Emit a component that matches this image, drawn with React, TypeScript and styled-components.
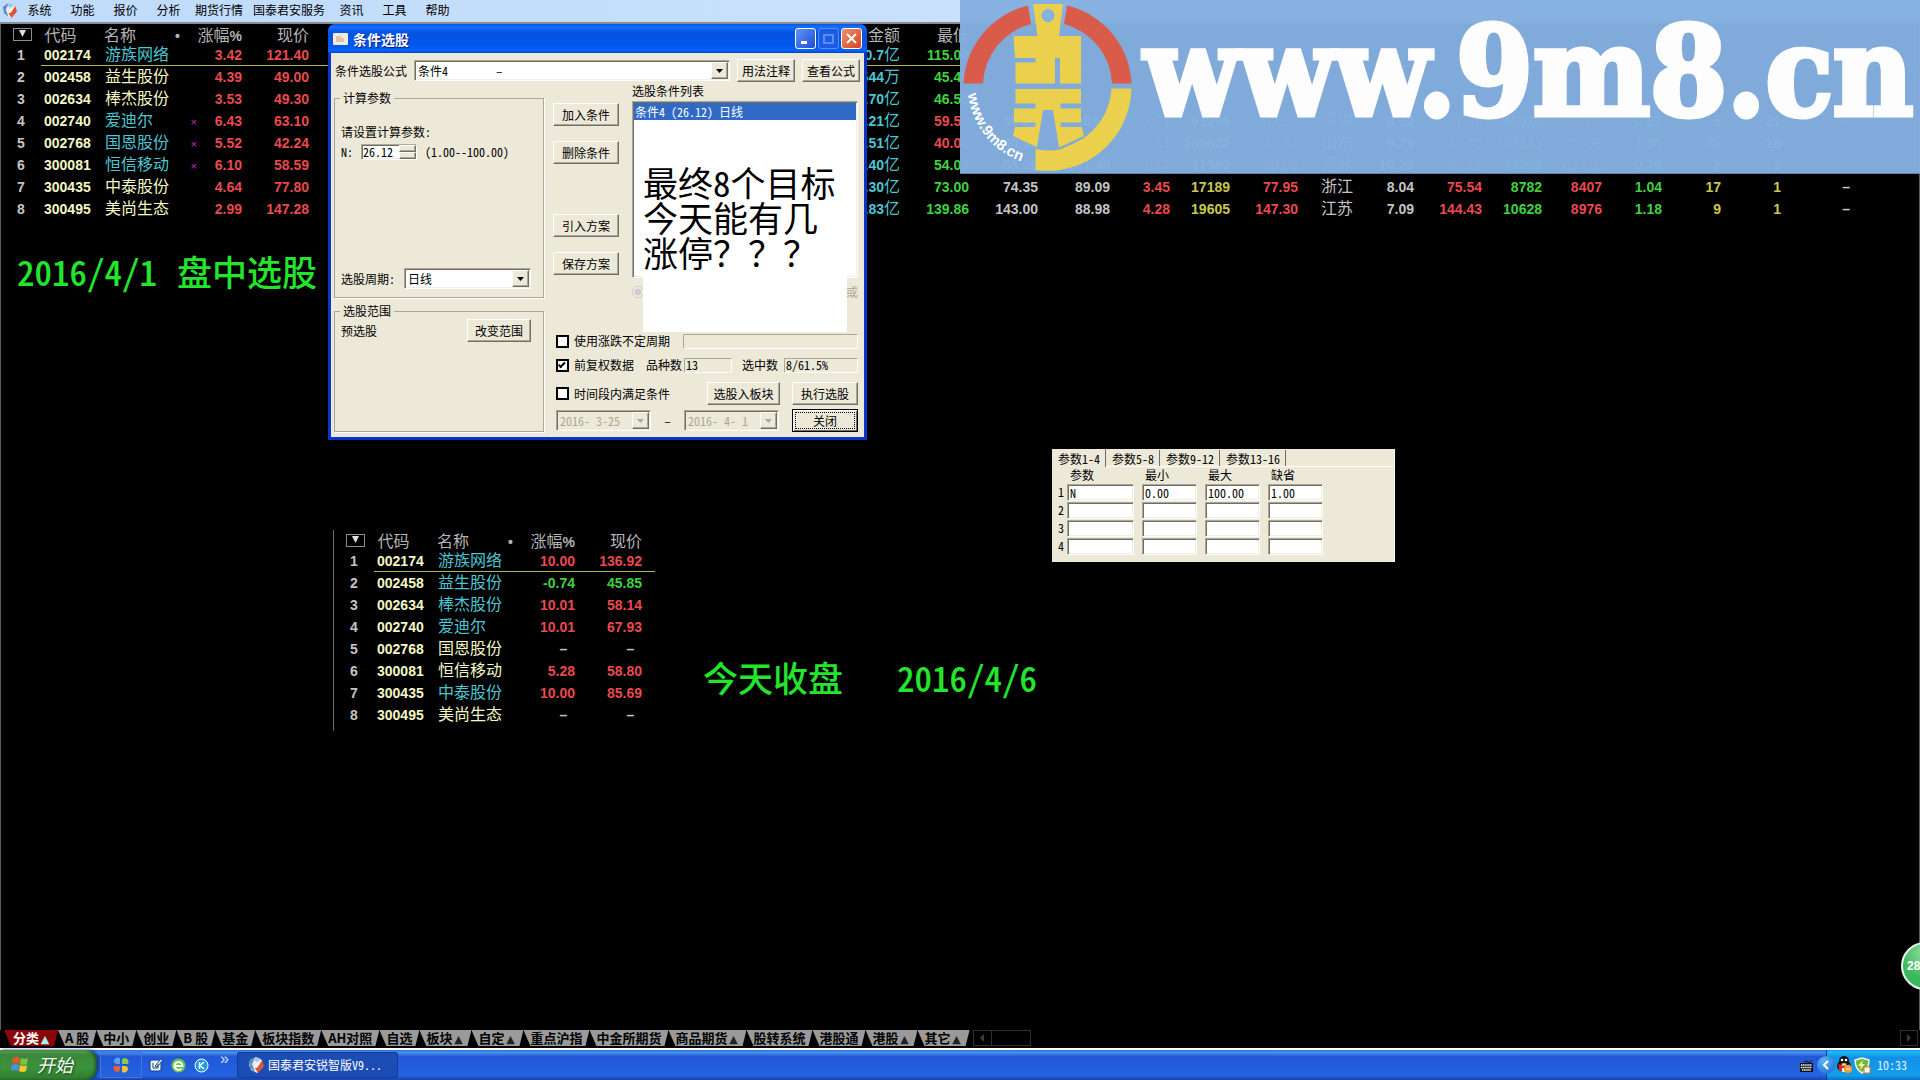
import React from "react";
import styled, { createGlobalStyle, css } from "styled-components";

const uiFont = `"Noto Sans CJK SC", "Liberation Sans", sans-serif`;
const numFont = `"Liberation Sans", "Noto Sans CJK SC", sans-serif`;

const red = "#e84a4e";
const green = "#3fd23f";
const yellow = "#c8c850";
const grey = "#c4c4c4";
const cyan = "#4cc6d2";
const cream = "#f4f8c4";

const GlobalStyle = createGlobalStyle`
  *, *::before, *::after { box-sizing: border-box; }
  body { margin: 0; background: #000; }
  button, input, select { font: inherit; color: inherit; margin: 0; border-radius: 0; }
`;

const raised = css`
  border: 1px solid;
  border-color: #fff #716f64 #716f64 #fff;
  box-shadow: inset -1px -1px 0 #aca899;
`;

const sunken = css`
  border: 1px solid;
  border-color: #aca899 #fff #fff #aca899;
  box-shadow: inset 1px 1px 0 #716f64, inset -1px -1px 0 #f1efe2;
`;

const Screen = styled.div`
  position: relative;
  display: flex;
  flex-direction: column;
  min-height: 100vh;
  overflow: hidden;
  background: #000;
  color: #000;
  font-family: ${uiFont};
  font-size: 12px;
  line-height: 16px;
  font-feature-settings: "hwid";
`;

/* ---------- menu bar ---------- */

const MenuBar = styled.nav`
  display: flex;
  align-items: center;
  height: 24px;
  padding-bottom: 2px;
  border-bottom: 2px solid #8a8d90;
  background: linear-gradient(90deg, #bfdbfb, #d3e6fb);
`;

const MenuLogo = styled.span`
  display: flex;
  justify-content: center;
  width: 18px;
`;

const MenuItem = styled.button`
  min-width: 43px;
  padding: 0 5px;
  border: 0;
  background: none;
  white-space: nowrap;
`;

/* ---------- quotes ---------- */

const Main = styled.main`
  position: relative;
  flex: 1;
  border: solid #5c5c5c;
  border-width: 0 1px;
`;

const QuoteTable = styled.table`
  width: 100%;
  table-layout: fixed;
  border-collapse: separate;
  border-spacing: 0;
  font: bold 14px/18px ${numFont};
  color: ${grey};
`;

const HeadCell = styled.th<{ $align?: string }>`
  height: 20px;
  padding: 0;
  text-align: ${(p) => p.$align ?? "right"};
  font: 400 16px/18px ${uiFont};
  color: #b4b4b4;
  white-space: nowrap;
`;

const Percent = styled.span`
  font: bold 14px/14px ${numFont};
`;

const QuoteCell = styled.td<{ $color?: string; $align?: string; $lined?: boolean; $indent?: number }>`
  height: 22px;
  padding: 0 0 0 ${(p) => p.$indent ?? 0}px;
  text-align: ${(p) => p.$align ?? "right"};
  color: ${(p) => p.$color ?? grey};
  border-bottom: 1px solid ${(p) => (p.$lined ? "#b4b450" : "transparent")};
  white-space: nowrap;
`;

const Han = styled.span`
  font: 400 16px/14px ${uiFont};
`;

const Flag = styled.span`
  color: #c030c8;
  font: 11px/14px ${numFont};
`;

const FilterButton = styled.button`
  display: block;
  width: 19px;
  height: 13px;
  margin: 0 0 0 12px;
  padding: 0;
  border: 1px solid #8c8c8c;
  background: none;
  line-height: 0;
`;

const ClosingQuotes = styled.section`
  position: absolute;
  left: 332px;
  top: 506px;
  width: 322px;
  padding-bottom: 5px;
  border-left: 1px solid #6a6a6a;
`;

const Note = styled.p<{ $x: number; $y: number; $gap: number }>`
  position: absolute;
  left: ${(p) => p.$x}px;
  top: ${(p) => p.$y}px;
  display: flex;
  gap: ${(p) => p.$gap}px;
  margin: 0;
  color: #22e52c;
  font: 500 35px/44px ${uiFont};
  font-feature-settings: "hwid";
  white-space: nowrap;
`;

/* ---------- watermark banner ---------- */

const Banner = styled.aside`
  position: absolute;
  z-index: 5;
  top: 0;
  right: 0;
  display: flex;
  align-items: center;
  width: 50%;
  height: 174px;
  overflow: hidden;
  background: rgba(131, 175, 224, 0.97);
  border-bottom: 1px solid #5f83a8;
`;

const BannerText = styled.span`
  margin-left: 8px;
  color: #fdfdfe;
  font: bold 123px/144px "DejaVu Serif Condensed", "DejaVu Serif", serif;
  font-stretch: condensed;
  -webkit-text-stroke: 5px #fdfdfe;
  padding-bottom: 30px;
  white-space: nowrap;
`;

/* ---------- dialog ---------- */

const Dialog = styled.section`
  position: absolute;
  z-index: 3;
  left: 327px;
  top: 0;
  width: 539px;
  padding: 0 3px 3px;
  border-radius: 7px 7px 0 0;
  background: #0b35c8;
`;

const TitleBar = styled.header`
  display: flex;
  align-items: center;
  gap: 2px;
  height: 29px;
  margin: 0 -3px;
  padding: 0 5px 0 5px;
  border-radius: 7px 7px 0 0;
  background: linear-gradient(#0a55d8, #1470ff 10%, #0453e0 30%, #0458ee 75%, #0364ff 92%, #0340c0);
`;

const TitleText = styled.h1`
  flex: 1;
  margin: 0;
  color: #fff;
  font: bold 14px/20px ${uiFont};
  text-shadow: 1px 1px 1px #0a1883;
`;

const TitleButton = styled.button<{ $close?: boolean; $dim?: boolean }>`
  display: flex;
  align-items: center;
  justify-content: center;
  width: 21px;
  height: 21px;
  padding: 0;
  border: 1px solid ${(p) => (p.$dim ? "#5c8cf0" : "#fff")};
  border-radius: 3px;
  background: ${(p) =>
    p.$close
      ? "linear-gradient(135deg, #f09070, #d8431c)"
      : p.$dim
        ? "#1a5ce6"
        : "linear-gradient(135deg, #5f93f5, #1c4fd4)"};
`;

const DialogBody = styled.div`
  padding: 6px 4px 5px 3px;
  background: #ece9d8;
`;

const FormulaRow = styled.div`
  display: flex;
  align-items: center;
  gap: 7px;
  height: 23px;
  padding-left: 1px;
`;

const SelectBox = styled.span<{ $w?: number; $grow?: boolean; $disabled?: boolean }>`
  position: relative;
  display: flex;
  flex: ${(p) => (p.$grow ? "1" : "none")};
  width: ${(p) => (p.$w ? `${p.$w}px` : "auto")};
  height: 21px;
  ${sunken}
  background: ${(p) => (p.$disabled ? "#ece9d8" : "#fff")};
  color: ${(p) => (p.$disabled ? "#aca899" : "#000")};
  select {
    flex: 1;
    min-width: 0;
    padding: 0 18px 0 3px;
    border: 0;
    background: none;
    appearance: none;
    color: inherit;
    opacity: 1;
    line-height: 19px;
  }
`;

const DropArrow = styled.span`
  position: absolute;
  top: 1px;
  right: 1px;
  bottom: 1px;
  display: flex;
  align-items: center;
  justify-content: center;
  width: 17px;
  ${raised}
  background: #ece9d8;
  pointer-events: none;
`;

const PushButton = styled.button<{ $w: number; $default?: boolean }>`
  width: ${(p) => p.$w}px;
  height: 23px;
  padding: 0;
  ${raised}
  background: #ece9d8;
  line-height: 19px;
  white-space: nowrap;
  ${(p) =>
    p.$default &&
    css`
      border-color: #000;
      outline: 1px dotted #000;
      outline-offset: -4px;
      box-shadow: inset 1px 1px 0 #fff, inset -1px -1px 0 #716f64;
    `}
`;

const Columns = styled.div`
  display: flex;
  gap: 9px;
  margin-top: 1px;
`;

const LeftPane = styled.div`
  display: flex;
  flex-direction: column;
  gap: 5px;
  width: 210px;
  padding-top: 7px;
`;

const Group = styled.fieldset<{ $h: number }>`
  height: ${(p) => p.$h}px;
  min-width: 0;
  margin: 0;
  padding: 0 12px 0 6px;
  border: 1px solid #aca899;
  box-shadow: 1px 1px 0 #fff;
  legend {
    padding: 0 3px;
    margin-left: -1px;
    line-height: 16px;
  }
`;

const GroupLine = styled.div<{ $gap?: number; $top: number; $between?: boolean }>`
  display: flex;
  align-items: center;
  gap: ${(p) => p.$gap ?? 4}px;
  justify-content: ${(p) => (p.$between ? "space-between" : "flex-start")};
  margin-top: ${(p) => p.$top}px;
  min-height: 20px;
  white-space: nowrap;
`;

const SpinBox = styled.span`
  display: flex;
  width: 56px;
  height: 16px;
  ${sunken}
  background: #fff;
  input {
    flex: 1;
    min-width: 0;
    padding: 0 0 0 1px;
    border: 0;
    background: none;
    line-height: 14px;
  }
`;

const Spinner = styled.span`
  display: flex;
  flex-direction: column;
  width: 17px;
  button {
    flex: 1;
    min-height: 0;
    padding: 0;
    ${raised}
    background: #ece9d8;
    line-height: 0;
  }
`;

const RightPane = styled.div`
  display: flex;
  flex: 1;
  flex-direction: column;
  min-width: 0;
`;

const ListArea = styled.div`
  position: relative;
  display: flex;
  gap: 13px;
  padding-right: 2px;
`;

const ButtonStack = styled.div`
  display: flex;
  flex-direction: column;
  gap: 15px;
  padding-top: 20px;
`;

const StackGap = styled.span`
  height: 20px;
`;

const ListColumn = styled.div`
  display: flex;
  flex: 1;
  flex-direction: column;
`;

const ConditionList = styled.ul`
  height: 177px;
  margin: 2px 0 0;
  padding: 1px;
  list-style: none;
  ${sunken}
  background: #fff;
  li {
    padding-left: 1px;
    background: #316ac5;
    color: #fff;
    line-height: 17px;
  }
`;

const RadioLine = styled.div`
  display: flex;
  justify-content: space-between;
  align-items: center;
  height: 28px;
  color: #aca899;
  input { width: 12px; height: 12px; margin: 0; }
`;

const CoverNote = styled.p`
  position: absolute;
  left: 90px;
  top: 81px;
  width: 204px;
  height: 168px;
  margin: 0;
  background: #fff;
  font: 35px/35px ${uiFont};
  font-feature-settings: "hwid";
  white-space: nowrap;
`;

const OptionRow = styled.div<{ $top: number }>`
  display: flex;
  align-items: center;
  min-height: 16px;
  margin-top: ${(p) => p.$top}px;
  padding: 0 2px 0 3px;
`;

const CheckLabel = styled.label`
  display: flex;
  align-items: center;
  gap: 5px;
  input {
    display: grid;
    place-content: center;
    width: 13px;
    height: 13px;
    border: 2px solid #000;
    background: #fff;
    appearance: none;
  }
  input:checked::before {
    content: "";
    width: 7px;
    height: 4px;
    border: solid #000;
    border-width: 0 0 2px 2px;
    transform: rotate(-45deg) translateY(-1px);
  }
`;

const Readout = styled.output<{ $w: number }>`
  width: ${(p) => p.$w}px;
  height: 15px;
  padding-left: 1px;
  border: 1px solid;
  border-color: #aca899 #fff #fff #aca899;
  line-height: 12px;
`;

const Spring = styled.span`
  flex: 1;
`;

const Gap = styled.span<{ $w: number }>`
  width: ${(p) => p.$w}px;
  text-align: center;
`;

/* ---------- parameter sheet ---------- */

const ParamSheet = styled.section`
  position: absolute;
  left: 1051px;
  top: 425px;
  width: 343px;
  height: 113px;
  background: #ece9d8;
  border-right: 1px solid #fff;
`;

const TabRow = styled.div`
  display: flex;
  align-items: flex-end;
  height: 18px;
  border-bottom: 1px solid #fff;
`;

const SheetTab = styled.button<{ $on?: boolean }>`
  height: ${(p) => (p.$on ? 18 : 16)}px;
  margin-bottom: ${(p) => (p.$on ? -1 : 0)}px;
  padding: 0 5px 0 6px;
  border: 0;
  border-right: 1px solid #716f64;
  background: #ece9d8;
  line-height: 15px;
`;

const ParamTable = styled.table`
  margin: 0 0 0 4px;
  border-collapse: separate;
  border-spacing: 0;
  th { padding: 0 0 0 3px; font-weight: 400; text-align: left; line-height: 16px; }
  tbody th { width: 11px; padding-left: 2px; }
  td { padding: 0 8px 0 0; }
  tbody td { height: 18px; }
`;

const ParamInput = styled.input<{ $w: number }>`
  display: block;
  width: ${(p) => p.$w}px;
  height: 17px;
  padding: 0 2px;
  ${sunken}
  background: #fff;
  line-height: 13px;
`;

/* ---------- floating ball ---------- */

const Ball = styled.button`
  position: absolute;
  z-index: 4;
  right: -29px;
  bottom: 90px;
  width: 48px;
  height: 48px;
  padding: 0 0 0 4px;
  border: 2px solid #e8f4ea;
  border-radius: 50%;
  background: radial-gradient(circle at 50% 20%, #8fe0a0, #3cb85c 60%);
  color: #fff;
  font: bold 12px/20px ${numFont};
  text-align: left;
`;

/* ---------- category tabs ---------- */

const CategoryBar = styled.nav`
  display: flex;
  align-items: stretch;
  height: 17px;
  margin-bottom: 1px;
  padding: 0 3px 0 4px;
`;

const Category = styled.button<{ $on?: boolean }>`
  height: 16px;
  padding: 0 7px 0 ${(p) => (p.$on ? 9 : 7)}px;
  border: 0;
  clip-path: polygon(0 0, 100% 0, calc(100% - 4px) 100%, 7px 100%);
  background: ${(p) => (p.$on ? "#8c0508" : "#9a9a9a")};
  color: ${(p) => (p.$on ? "#fff" : "#000")};
  font: bold 13px/16px ${uiFont};
  white-space: nowrap;
`;

const Caret = styled.span<{ $on?: boolean }>`
  display: inline-block;
  width: 12px;
  color: ${(p) => (p.$on ? "#9ff4f4" : "#222")};
  font: 11px/14px "DejaVu Sans", sans-serif;
  text-align: center;
`;

const ScrollBox = styled.button<{ $w: number }>`
  display: flex;
  align-items: center;
  justify-content: center;
  width: ${(p) => p.$w}px;
  height: 16px;
  margin-right: -1px;
  padding: 0;
  border: 1px solid #303030;
  background: #000;
`;

/* ---------- taskbar ---------- */

const Taskbar = styled.footer`
  display: flex;
  align-items: stretch;
  height: 32px;
  border-top: 2px solid #fff;
  background: linear-gradient(#3168d5, #4993e6 8%, #2157d7 22%, #2663e0 85%, #1941a5);
`;

const StartButton = styled.button`
  display: flex;
  align-items: center;
  gap: 7px;
  width: 97px;
  padding: 0 0 2px 11px;
  border: 0;
  border-radius: 0 10px 12px 0;
  background: linear-gradient(#5eac56, #3c873c 15%, #399339 60%, #2f7a2f);
  box-shadow: inset -2px 0 3px #1e561e, 2px 0 3px #14379a;
  color: #fff;
  font: italic 18px/24px ${uiFont};
  text-shadow: 1px 1px 2px #123c12;
`;

const QuickLaunch = styled.div`
  display: flex;
  align-items: center;
  width: 140px;
  padding-left: 3px;
`;

const QuickButton = styled.button<{ $boxed?: boolean }>`
  display: flex;
  align-items: center;
  justify-content: center;
  width: ${(p) => (p.$boxed ? 42 : 23)}px;
  height: 26px;
  margin-right: ${(p) => (p.$boxed ? 2 : 0)}px;
  padding: 0;
  border: 1px solid ${(p) => (p.$boxed ? "#3f78e6" : "transparent")};
  background: none;
`;

const More = styled.button`
  align-self: flex-start;
  padding: 0 0 0 7px;
  border: 0;
  background: none;
  color: #cfe0ff;
  font: 16px/18px ${numFont};
`;

const TaskButton = styled.button`
  display: flex;
  align-items: center;
  gap: 4px;
  width: 161px;
  height: 26px;
  margin-top: 2px;
  padding: 0 10px;
  border: 1px solid #123a9c;
  border-radius: 2px;
  background: #1c4db4;
  color: #fff;
  white-space: nowrap;
`;

const KeyboardButton = styled.button`
  display: flex;
  align-items: center;
  margin-left: auto;
  padding: 0 13px 0 0;
  border: 0;
  background: none;
`;

const Tray = styled.div`
  position: relative;
  display: flex;
  align-items: center;
  gap: 2px;
  width: 94px;
  padding: 0 13px 0 9px;
  border-left: 1px solid #0b3f9e;
  background: linear-gradient(#1a9ff0, #19b9f3 8%, #1290e8 25%, #139ee9 85%, #0d6fc8);
  color: #fff;
`;

const TrayToggle = styled.button`
  position: absolute;
  left: -10px;
  top: 6px;
  width: 18px;
  height: 18px;
  padding: 0;
  border: 0;
  border-radius: 50%;
  background: radial-gradient(circle at 40% 30%, #5fb6f6, #1560d0);
  line-height: 0;
`;

const Clock = styled.time`
  margin-left: auto;
  color: #e6f2ff;
`;

/* ---------- drawings ---------- */

const BrokerIcon = ({ size = 16 }: { size?: number }) => (
  <svg width={size} height={size} viewBox="0 0 16 16">
    <path d="M2 3 8 0l6 3 1 7-6 6-6-3-2-5z" fill="#e4ecf4" />
    <path d="M1 4l6-4-1 3-2 4 3 8-5-4z" fill="#5b8fc0" />
    <path d="M8 0l5 2-4 3-3-2z" fill="#a8c4e0" />
    <path d="M14 3l2 6-6 7-3-5c3 0 5-4 7-8z" fill="#e2502e" />
    <path d="M9 6l2 0-2 5-2-2z" fill="#fff" />
  </svg>
);

const Down = ({ dim }: { dim?: boolean }) => (
  <svg width="7" height="4" viewBox="0 0 7 4">
    <path d="M0 0h7L3.500 4z" fill={dim ? "#aca899" : "#000"} />
  </svg>
);

const FilterMark = () => (
  <svg width="9" height="8" viewBox="0 0 9 8">
    <path d="M1 0h7L4.500 7z" fill="#e0e0e0" />
  </svg>
);

const WindowsFlag = () => (
  <svg width="19" height="18" viewBox="0 0 19 18">
    <path d="M2 3q4-2 7 0L8 9Q5 7 1 9z" fill="#e8562a" />
    <path d="M10 3q4 2 7 0l-1 6q-4 2-7 0z" fill="#7cc243" />
    <path d="M1 10q4-2 7 0l-1 6q-4-2-7 0z" fill="#4a8cf0" />
    <path d="M9 10q4 2 7 0l-1 6q-4 2-7 0z" fill="#f8c828" />
  </svg>
);

const Pinwheel = () => (
  <svg width="18" height="18" viewBox="0 0 18 18">
    <path d="M8 8V2a4 4 0 0 0-6 4 3 3 0 0 0 3 2z" fill="#5aa0f0" />
    <path d="M10 8h6a4 4 0 0 0-4-6 3 3 0 0 0-2 3z" fill="#8cc84a" />
    <path d="M10 10v6a4 4 0 0 0 6-4 3 3 0 0 0-3-2z" fill="#f4c430" />
    <path d="M8 10H2a4 4 0 0 0 4 6 3 3 0 0 0 2-3z" fill="#e86038" />
  </svg>
);

const NotepadIcon = () => (
  <svg width="16" height="16" viewBox="0 0 16 16">
    <rect x="2" y="3" width="11" height="11" rx="2" fill="#e8f2fb" stroke="#16427c" />
    <path d="M5 6v5h5V7M7 9l6-7 2 1-6 7z" fill="#fff" stroke="#16427c" />
  </svg>
);

const BrowserIcon = () => (
  <svg width="15" height="15" viewBox="0 0 15 15">
    <circle cx="7.500" cy="7.500" r="7" fill="#6cc24a" />
    <path d="M3.500 8h8a4 4 0 1 0-1 2.600" fill="none" stroke="#fff" strokeWidth="2" />
  </svg>
);

const MusicIcon = () => (
  <svg width="15" height="15" viewBox="0 0 15 15">
    <circle cx="7.500" cy="7.500" r="6.500" fill="#1c9be8" stroke="#fff" />
    <path d="M5.500 4v7M10 4 6 7.500l4 3.500" fill="none" stroke="#fff" strokeWidth="1.500" />
  </svg>
);

const KeyboardIcon = () => (
  <svg width="13" height="13" viewBox="0 0 13 13">
    <path d="M4 3q2-2 4 0t4-2" fill="none" stroke="#111" />
    <rect x="0" y="4" width="13" height="9" fill="#111" />
    <path d="M1 6h11M1 8.500h11M2 11h9" stroke="#fff" strokeWidth="1.500" strokeDasharray="1.500 0.600" />
  </svg>
);

const PenguinIcon = () => (
  <svg width="16" height="18" viewBox="0 0 16 18">
    <ellipse cx="8" cy="10" rx="7" ry="6" fill="#111" />
    <ellipse cx="8" cy="5" rx="5" ry="5" fill="#111" />
    <ellipse cx="8" cy="12" rx="4" ry="4" fill="#fff" />
    <circle cx="6" cy="4" r="1.300" fill="#fff" />
    <circle cx="10" cy="4" r="1.300" fill="#fff" />
    <path d="M5 7h6l-3 1.500z" fill="#f4a020" />
    <path d="M2 8q6 3 12 0v3q-5 2-8 1v3H3v-3z" fill="#e0281c" />
    <circle cx="12" cy="13" r="4" fill="#f0a030" />
    <path d="M10 13h4" stroke="#fff" />
  </svg>
);

const ShieldIcon = () => (
  <svg width="17" height="17" viewBox="0 0 17 17">
    <path d="M8 1l7 2q0 9-7 13Q1 12 1 3z" fill="#6cb83c" stroke="#f4f8e8" strokeWidth="1.500" />
    <path d="M9 3 4 9h3l-1 4 5-6H8z" fill="#fdf4a0" />
    <rect x="10" y="10" width="6" height="6" fill="#fff" stroke="#d87820" />
  </svg>
);

const LogoSvg = styled.svg`
  flex: none;
`;

const CoinLogo = () => (
  <LogoSvg width="176" height="174" viewBox="0 0 176 174">
    <path d="M3.500 83.500A84 84 0 0 1 68 5.500L71 24A64 64 0 0 0 23 83.500z" fill="#d95c4a" />
    <path d="M107 5.500A84 84 0 0 1 171.500 83.500H152A64 64 0 0 0 104 24z" fill="#d95c4a" />
    <path d="M151.500 88.500H171.500A84 84 0 0 1 75.500 170V148A64 64 0 0 0 151.500 88.500z" fill="#ead04c" />
    <path
      fillRule="evenodd"
      d="M73 4h30l-4 32h22v47.500H100V58h-5v25.500H55.500V62.500H75.500V58H55L53.500 36H77.500zM88 9a6.500 6.500 0 1 0 .1 0z"
      fill="#ead04c"
    />
    <path
      d="M55.500 89H121v14.500H100.500v5H121V122.500H100.500V127H122l2 10-25 10.500L93 110H83l-6 37-24-11 2-9H75.500v-4.500H54V108.500H75.500v-5H55.500z"
      fill="#ead04c"
    />
    <path d="M76 148q14 3 25 0l23-11" fill="none" stroke="#7faad9" strokeWidth="2" />
    <defs>
      <path id="rim" d="M8 94A81 81 0 0 0 66 163" />
    </defs>
    <text fill="#fff" fontFamily="Liberation Sans" fontWeight="bold" fontSize="15">
      <textPath href="#rim">www.9m8.cn</textPath>
    </text>
  </LogoSvg>
);

/* ---------- data ---------- */

type Quote = {
  code: string;
  name: string;
  hot?: boolean;
  flag?: boolean;
  change: string;
  price: string;
  tone?: string;
  amount?: [string, string];
  low?: [string, string];
  rest?: string[];
};

const picked: Quote[] = [
  { code: "002174", name: "游族网络", hot: true, change: "3.42", price: "121.40", amount: ["10.7", "亿"], low: ["115.00", green] },
  { code: "002458", name: "益生股份", change: "4.39", price: "49.00", amount: ["5544", "万"], low: ["45.40", green] },
  { code: "002634", name: "棒杰股份", change: "3.53", price: "49.30", amount: ["1.70", "亿"], low: ["46.50", green] },
  {
    code: "002740", name: "爱迪尔", hot: true, flag: true, change: "6.43", price: "63.10", amount: ["4.21", "亿"], low: ["59.50", red],
    rest: ["59.20", "98.65", "3.61", "61296", "63.10", "深圳", "8.72", "61.38", "40516", "60700", "0.67", "5", "21", "–"],
  },
  {
    code: "002768", name: "国恩股份", hot: true, flag: true, change: "5.52", price: "42.24", amount: ["1.51", "亿"], low: ["40.00", red],
    rest: ["40.03", "140.34", "2.21", "200622", "42.24", "山东", "9.79", "42.43", "103223", "97399", "1.06", "35", "29", "–"],
  },
  {
    code: "300081", name: "恒信移动", hot: true, flag: true, change: "6.10", price: "58.59", amount: ["2.40", "亿"], low: ["54.00", green],
    rest: ["55.20", "141.48", "1.17", "11980", "58.59", "河北", "10.29", "57.12", "49263", "62716", "0.79", "2", "3", "–"],
  },
  {
    code: "300435", name: "中泰股份", change: "4.64", price: "77.80", amount: ["1.30", "亿"], low: ["73.00", green],
    rest: ["74.35", "89.09", "3.45", "17189", "77.95", "浙江", "8.04", "75.54", "8782", "8407", "1.04", "17", "1", "–"],
  },
  {
    code: "300495", name: "美尚生态", change: "2.99", price: "147.28", amount: ["2.83", "亿"], low: ["139.86", green],
    rest: ["143.00", "88.98", "4.28", "19605", "147.30", "江苏", "7.09", "144.43", "10628", "8976", "1.18", "9", "1", "–"],
  },
];

const closing: Quote[] = [
  { code: "002174", name: "游族网络", hot: true, change: "10.00", price: "136.92" },
  { code: "002458", name: "益生股份", hot: true, change: "-0.74", price: "45.85", tone: green },
  { code: "002634", name: "棒杰股份", hot: true, change: "10.01", price: "58.14" },
  { code: "002740", name: "爱迪尔", hot: true, change: "10.01", price: "67.93" },
  { code: "002768", name: "国恩股份", change: "–", price: "–", tone: grey },
  { code: "300081", name: "恒信移动", change: "5.28", price: "58.80" },
  { code: "300435", name: "中泰股份", hot: true, change: "10.00", price: "85.69" },
  { code: "300495", name: "美尚生态", change: "–", price: "–", tone: grey },
];

const restTones = [grey, grey, red, yellow, red, grey, grey, red, green, red, green, yellow, yellow, grey];
const baseWidths = [40, 63, 71, 22, 45, 67];
const wideWidths = [591, 69, 69, 72, 60, 60, 68, 55, 61, 68, 60, 60, 60, 59, 60, 69];

const menus = ["系统", "功能", "报价", "分析", "期货行情", "国泰君安服务", "资讯", "工具", "帮助"];
const categories = [
  "分类▲", "A 股", "中小", "创业", "B 股", "基金", "板块指数", "AH对照", "自选", "板块▲", "自定▲",
  "重点沪指", "中金所期货", "商品期货▲", "股转系统", "港股通", "港股▲", "其它▲",
];
const paramRows = [["N", "0.00", "100.00", "1.00"], ["", "", "", ""], ["", "", "", ""], ["", "", "", ""]];
const paramHeads = ["参数", "最小", "最大", "缺省"];

function Quotes({ rows, wide }: { rows: Quote[]; wide?: boolean }) {
  const widths = wide ? [...baseWidths, ...wideWidths] : baseWidths;
  return (
    <QuoteTable>
      <colgroup>
        {widths.map((w, i) => <col key={i} style={{ width: w }} />)}
        <col />
      </colgroup>
      <thead>
        <tr>
          <HeadCell $align="left">
            <FilterButton aria-label="筛选"><FilterMark /></FilterButton>
          </HeadCell>
          <HeadCell $align="left">&nbsp;代码</HeadCell>
          <HeadCell $align="left">名称</HeadCell>
          <HeadCell $align="left"><Percent>•</Percent></HeadCell>
          <HeadCell>涨幅<Percent>%</Percent></HeadCell>
          <HeadCell>现价</HeadCell>
          {wide && <HeadCell>总金额</HeadCell>}
          {wide && <HeadCell>最低</HeadCell>}
          <HeadCell colSpan={wide ? 15 : 1} />
        </tr>
      </thead>
      <tbody>
        {rows.map((q, i) => {
          const lined = i === 0;
          const tone = q.tone ?? red;
          const dash = q.price === "–";
          return (
            <tr key={q.code}>
              <QuoteCell $align="center">{i + 1}</QuoteCell>
              <QuoteCell $align="left" $indent={3} $color={cream} $lined={lined}>{q.code}</QuoteCell>
              <QuoteCell $align="left" $indent={1} $color={q.hot ? cyan : cream} $lined={lined}><Han>{q.name}</Han></QuoteCell>
              <QuoteCell $lined={lined}>{q.flag && <Flag>×</Flag>}</QuoteCell>
              <QuoteCell $color={tone} $lined={lined}>{q.change}{dash && <>&nbsp;&nbsp;</>}</QuoteCell>
              <QuoteCell $color={tone} $lined={lined}>{q.price}{dash && <>&nbsp;&nbsp;</>}</QuoteCell>
              {wide && q.amount && (
                <QuoteCell $color={cyan} $lined={lined}>{q.amount[0]}<Han>{q.amount[1]}</Han></QuoteCell>
              )}
              {wide && q.low && <QuoteCell $color={q.low[1]} $lined={lined}>{q.low[0]}</QuoteCell>}
              {wide &&
                restTones.map((c, k) => (
                  <QuoteCell key={k} $color={c} $lined={lined}>
                    {k === 5 ? <Han>{q.rest?.[k]}</Han> : q.rest?.[k]}
                  </QuoteCell>
                ))}
              <QuoteCell $lined={lined} />
            </tr>
          );
        })}
      </tbody>
    </QuoteTable>
  );
}

function Dropdown({ id, text, w, grow, disabled }: { id: string; text: string; w?: number; grow?: boolean; disabled?: boolean }) {
  return (
    <SelectBox $w={w} $grow={grow} $disabled={disabled}>
      <select id={id} aria-label={text} disabled={disabled}><option>{text}</option></select>
      <DropArrow><Down dim={disabled} /></DropArrow>
    </SelectBox>
  );
}

function ConditionDialog() {
  return (
    <Dialog>
      <TitleBar>
        <svg width="15" height="14" viewBox="0 0 15 14">
          <rect x="0" y="1" width="15" height="12" rx="1" fill="#f3ead8" />
          <path d="M3 5h5M3 7h8M3 9h8" stroke="#c8a078" />
        </svg>
        <Gap $w={1} />
        <TitleText>条件选股</TitleText>
        <TitleButton aria-label="最小化">
          <svg width="13" height="13"><path d="M2 9h6v3H2z" fill="#fff" /></svg>
        </TitleButton>
        <TitleButton $dim aria-label="最大化">
          <svg width="13" height="13"><path d="M2 3h9v8H2z" fill="none" stroke="#5c8cf0" strokeWidth="2" /></svg>
        </TitleButton>
        <TitleButton $close aria-label="关闭窗口">
          <svg width="13" height="13"><path d="M2 2l9 9M11 2l-9 9" stroke="#fff" strokeWidth="2" /></svg>
        </TitleButton>
      </TitleBar>
      <DialogBody>
        <FormulaRow>
          <label htmlFor="formula">条件选股公式</label>
          <Dropdown id="formula" grow text={"条件4\u3000\u3000\u3000\u3000\u3000\u3000\u3000\u3000–"} />
          <PushButton $w={58}>用法注释</PushButton>
          <PushButton $w={58}>查看公式</PushButton>
        </FormulaRow>
        <Columns>
          <LeftPane>
            <Group $h={208}>
              <legend>计算参数</legend>
              <GroupLine $top={16}>请设置计算参数:</GroupLine>
              <GroupLine $top={0} $gap={8}>
                <label htmlFor="n">N:</label>
                <SpinBox>
                  <input id="n" defaultValue="26.12" />
                  <Spinner>
                    <button aria-label="增加" />
                    <button aria-label="减少" />
                  </Spinner>
                </SpinBox>
                <span>(1.00--100.00)</span>
              </GroupLine>
              <GroupLine $top={106} $between>
                <label htmlFor="cycle">选股周期:</label>
                <Dropdown id="cycle" w={127} text="日线" />
              </GroupLine>
            </Group>
            <Group $h={129}>
              <legend>选股范围</legend>
              <GroupLine $top={0} $between>
                <span>预选股</span>
                <PushButton $w={64}>改变范围</PushButton>
              </GroupLine>
            </Group>
          </LeftPane>
          <RightPane>
            <ListArea>
              <ButtonStack>
                <PushButton $w={66}>加入条件</PushButton>
                <PushButton $w={66}>删除条件</PushButton>
                <StackGap />
                <PushButton $w={66}>引入方案</PushButton>
                <PushButton $w={66}>保存方案</PushButton>
              </ButtonStack>
              <ListColumn>
                <span>选股条件列表</span>
                <ConditionList><li>条件4 (26.12) 日线</li></ConditionList>
                <RadioLine>
                  <input type="radio" aria-label="与" defaultChecked disabled />
                  <span>或</span>
                </RadioLine>
              </ListColumn>
              <CoverNote>最终8个目标<br />今天能有几<br />涨停？？？</CoverNote>
            </ListArea>
            <OptionRow $top={27}>
              <CheckLabel><input type="checkbox" />使用涨跌不定周期</CheckLabel>
              <Spring />
              <Readout $w={175} />
            </OptionRow>
            <OptionRow $top={8}>
              <CheckLabel><input type="checkbox" defaultChecked />前复权数据</CheckLabel>
              <Gap $w={12} />
              <span>品种数</span>
              <Gap $w={2} />
              <Readout $w={48}>13</Readout>
              <Spring />
              <span>选中数</span>
              <Gap $w={6} />
              <Readout $w={74}>8/61.5%</Readout>
            </OptionRow>
            <OptionRow $top={9}>
              <CheckLabel><input type="checkbox" />时间段内满足条件</CheckLabel>
              <Spring />
              <PushButton $w={73}>选股入板块</PushButton>
              <Gap $w={12} />
              <PushButton $w={66}>执行选股</PushButton>
            </OptionRow>
            <OptionRow $top={4}>
              <Dropdown id="from" w={95} disabled text="2016- 3-25" />
              <Gap $w={33}>–</Gap>
              <Dropdown id="to" w={95} disabled text="2016- 4- 1" />
              <Spring />
              <PushButton $w={66} $default>关闭</PushButton>
            </OptionRow>
          </RightPane>
        </Columns>
      </DialogBody>
    </Dialog>
  );
}

export default function App() {
  return (
    <Screen>
      <GlobalStyle />
      <MenuBar>
        <MenuLogo><BrokerIcon size={15} /></MenuLogo>
        {menus.map((m) => <MenuItem key={m}>{m}</MenuItem>)}
      </MenuBar>

      <Main>
        <Quotes rows={picked} wide />
        <Note $x={16} $y={225} $gap={20}><span>2016/4/1</span><span>盘中选股</span></Note>
        <ConditionDialog />
        <ParamSheet>
          <TabRow>
            {["参数1-4", "参数5-8", "参数9-12", "参数13-16"].map((t, i) => (
              <SheetTab key={t} $on={i === 0}>{t}</SheetTab>
            ))}
          </TabRow>
          <ParamTable>
            <thead>
              <tr><td />{paramHeads.map((h) => <th key={h}>{h}</th>)}</tr>
            </thead>
            <tbody>
              {paramRows.map((r, i) => (
                <tr key={i}>
                  <th>{i + 1}</th>
                  {r.map((v, k) => (
                    <td key={k}>
                      <ParamInput $w={k === 0 ? 67 : 55} defaultValue={v} aria-label={`${paramHeads[k]} ${i + 1}`} />
                    </td>
                  ))}
                </tr>
              ))}
            </tbody>
          </ParamTable>
        </ParamSheet>
        <ClosingQuotes><Quotes rows={closing} /></ClosingQuotes>
        <Note $x={702} $y={631} $gap={54}><span>今天收盘</span><span>2016/4/6</span></Note>
      </Main>

      <CategoryBar>
        {categories.map((c, i) => (
          <Category key={c} $on={i === 0}>
            {c.replace("▲", "")}
            {c.endsWith("▲") && <Caret $on={i === 0}>▲</Caret>}
          </Category>
        ))}
        <Gap $w={3} />
        <ScrollBox $w={19} aria-label="向左">
          <svg width="6" height="8"><path d="M5 0v8L1 4z" fill="#3c3c3c" /></svg>
        </ScrollBox>
        <ScrollBox $w={40} aria-label="滚动条" />
        <Spring />
        <ScrollBox $w={18} aria-label="向右">
          <svg width="6" height="8"><path d="M1 0v8l4-4z" fill="#3c3c3c" /></svg>
        </ScrollBox>
      </CategoryBar>

      <Taskbar>
        <StartButton><WindowsFlag />开始</StartButton>
        <QuickLaunch>
          <QuickButton $boxed aria-label="显示桌面"><Pinwheel /></QuickButton>
          <QuickButton aria-label="便笺"><NotepadIcon /></QuickButton>
          <QuickButton aria-label="浏览器"><BrowserIcon /></QuickButton>
          <QuickButton aria-label="音乐"><MusicIcon /></QuickButton>
          <More>»</More>
        </QuickLaunch>
        <TaskButton><BrokerIcon />国泰君安锐智版V9...</TaskButton>
        <KeyboardButton aria-label="输入法"><KeyboardIcon /></KeyboardButton>
        <Tray>
          <TrayToggle aria-label="展开">
            <svg width="18" height="18"><path d="M11 5 7 9l4 4" fill="none" stroke="#fff" strokeWidth="2" /></svg>
          </TrayToggle>
          <PenguinIcon />
          <ShieldIcon />
          <Clock>10:33</Clock>
        </Tray>
      </Taskbar>

      <Ball>28</Ball>
      <Banner>
        <CoinLogo />
        <BannerText>www.9m8.cn</BannerText>
      </Banner>
    </Screen>
  );
}
